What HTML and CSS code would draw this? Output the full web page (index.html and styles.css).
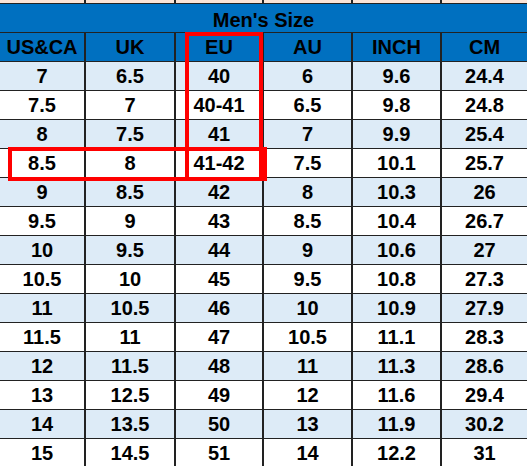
FILE: index.html
```html
<!DOCTYPE html>
<html>
<head>
<meta charset="utf-8">
<link rel="stylesheet" href="styles.css">
</head>
<body>
<div class="chart">
  <div class="grid">
    <div class="strip"></div><div class="strip"></div><div class="strip"></div><div class="strip"></div><div class="strip"></div><div class="strip"></div>
    <div class="title">Men's Size</div>
    <div class="head">US&amp;CA</div><div class="head">UK</div><div class="head">EU</div><div class="head">AU</div><div class="head">INCH</div><div class="head">CM</div>

    <div class="c alt">7</div><div class="c alt">6.5</div><div class="c alt">40</div><div class="c alt">6</div><div class="c alt">9.6</div><div class="c alt">24.4</div>
    <div class="c">7.5</div><div class="c">7</div><div class="c">40-41</div><div class="c">6.5</div><div class="c">9.8</div><div class="c">24.8</div>
    <div class="c alt">8</div><div class="c alt">7.5</div><div class="c alt">41</div><div class="c alt">7</div><div class="c alt">9.9</div><div class="c alt">25.4</div>
    <div class="c">8.5</div><div class="c">8</div><div class="c">41-42</div><div class="c">7.5</div><div class="c">10.1</div><div class="c">25.7</div>
    <div class="c alt">9</div><div class="c alt">8.5</div><div class="c alt">42</div><div class="c alt">8</div><div class="c alt">10.3</div><div class="c alt">26</div>
    <div class="c">9.5</div><div class="c">9</div><div class="c">43</div><div class="c">8.5</div><div class="c">10.4</div><div class="c">26.7</div>
    <div class="c alt">10</div><div class="c alt">9.5</div><div class="c alt">44</div><div class="c alt">9</div><div class="c alt">10.6</div><div class="c alt">27</div>
    <div class="c">10.5</div><div class="c">10</div><div class="c">45</div><div class="c">9.5</div><div class="c">10.8</div><div class="c">27.3</div>
    <div class="c alt">11</div><div class="c alt">10.5</div><div class="c alt">46</div><div class="c alt">10</div><div class="c alt">10.9</div><div class="c alt">27.9</div>
    <div class="c">11.5</div><div class="c">11</div><div class="c">47</div><div class="c">10.5</div><div class="c">11.1</div><div class="c">28.3</div>
    <div class="c alt">12</div><div class="c alt">11.5</div><div class="c alt">48</div><div class="c alt">11</div><div class="c alt">11.3</div><div class="c alt">28.6</div>
    <div class="c">13</div><div class="c">12.5</div><div class="c">49</div><div class="c">12</div><div class="c">11.6</div><div class="c">29.4</div>
    <div class="c alt">14</div><div class="c alt">13.5</div><div class="c alt">50</div><div class="c alt">13</div><div class="c alt">11.9</div><div class="c alt">30.2</div>
    <div class="c">15</div><div class="c">14.5</div><div class="c">51</div><div class="c">14</div><div class="c">12.2</div><div class="c">31</div>
  </div>
  <div class="mark mark-eu"></div>
  <div class="mark mark-row"></div>
</div>
</body>
</html>
```
FILE: styles.css
```css
html, body {
  margin: 0;
  padding: 0;
  background: #ffffff;
  overflow: hidden;
}
.chart {
  position: relative;
  width: 527px;
  height: 466px;
  overflow: hidden;
  font-family: "Liberation Sans", Arial, sans-serif;
  font-weight: bold;
  color: #000;
}
.grid {
  display: grid;
  grid-template-columns: 84px 88px 86px 87px 87px 85px;
  grid-template-rows: 3px 28px 28px;
  grid-auto-rows: 28px;
  column-gap: 2px;
  row-gap: 1px;
  background: #222;
}
.strip {
  background: #fce4d6;
}
.title {
  grid-column: 1 / -1;
  background: #0070c0;
  font-size: 20px;
  line-height: 28px;
  padding-top: 2px;
  height: 26px;
  text-align: center;
}
.head {
  background: #0070c0;
  font-size: 20px;
  line-height: 28px;
  text-align: center;
}
.c {
  background: #ffffff;
  font-size: 20px;
  line-height: 29px;
  text-align: center;
}
.c.alt {
  background: #ddebf7;
}
.mark {
  position: absolute;
  border: 4px solid #ff0000;
  box-sizing: border-box;
}
.mark-eu {
  left: 185px;
  top: 32px;
  width: 78px;
  height: 149px;
}
.mark-row {
  left: 8px;
  top: 147px;
  width: 259px;
  height: 34px;
}
```
